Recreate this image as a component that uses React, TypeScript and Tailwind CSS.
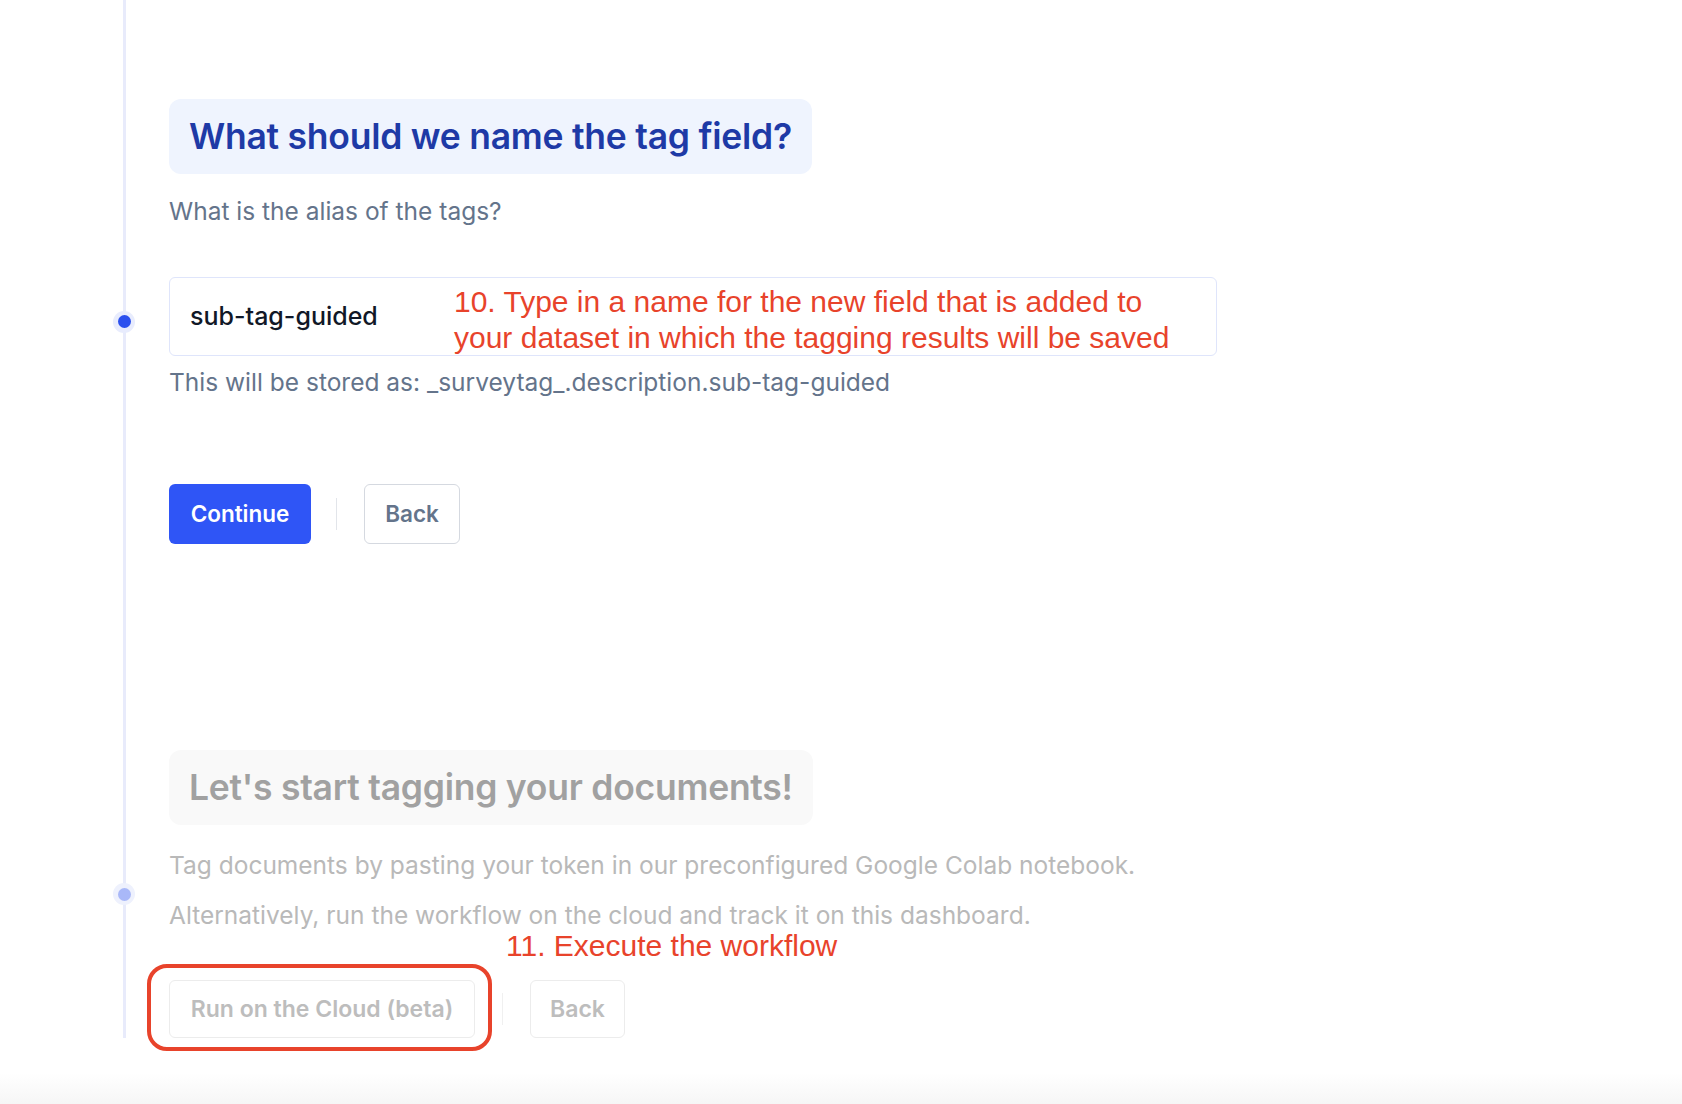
import React from "react";

const ui = { fontFamily: "Inter, 'Noto Sans', sans-serif" };
const note = { fontFamily: "'Liberation Sans', Arial, sans-serif" };

const Dot = ({ faded }: { faded?: boolean }) => (
  <span
    className={`absolute left-[-56px] top-1/2 -translate-y-1/2 flex h-[22px] w-[22px] items-center justify-center rounded-full ${
      faded ? "bg-[#eef1fd]" : "bg-[#e8ecfd]"
    }`}
  >
    <span className={`h-[13px] w-[13px] rounded-full ${faded ? "bg-[#a9b8f8]" : "bg-[#2b50ee]"}`} />
  </span>
);

export default function App() {
  return (
    <div className="flex h-[1104px] flex-col overflow-hidden bg-white" style={ui}>
      <div className="ml-[123px] border-l-[3px] border-[#e8ebfb] pl-[43px] pt-[99px]">
        {/* step 10 */}
        <div className="relative">
          <Dot />
          <div className="inline-flex h-[75px] items-center rounded-xl bg-[#eff4fe] px-[20px]">
            <h2 className="text-[35.5px] font-semibold tracking-[-0.25px] text-[#1e3aa6]">
              What should we name the tag field?
            </h2>
          </div>
          <p className="mt-[23px] text-[24.5px] leading-[28px] text-[#64748b]">What is the alias of the tags?</p>

          <div className="relative mt-[52px] flex h-[79px] w-[1048px] items-center rounded-md border border-[#dfe5fb] pl-5">
            <span className="text-[25px] font-medium text-[#111827]">sub-tag-guided</span>
            <div
              className="absolute left-[284px] top-[6px] text-[30px] leading-[36px] text-[#e8432b]"
              style={note}
            >
              10. Type in a name for the new field that is added to
              <br />
              your dataset in which the tagging results will be saved
            </div>
          </div>
          <p className="mt-[11px] text-[24.5px] leading-[30px] text-[#64748b]">
            This will be stored as: _surveytag_.description.sub-tag-guided
          </p>

          <div className="mt-[87px] flex items-center">
            <button className="h-[60px] w-[142px] rounded-md bg-[#2f55f6] text-[22.5px] font-semibold text-white">
              Continue
            </button>
            <span className="ml-[25px] mr-[27px] h-[32px] w-px bg-[#e2e5ea]" />
            <button className="h-[60px] w-[96px] rounded-md border border-[#d5d9e0] text-[22.5px] font-semibold text-[#64748b]">
              Back
            </button>
          </div>
        </div>

        {/* step 11 */}
        <div className="relative mt-[206px]">
          <Dot faded />
          <div className="inline-flex h-[75px] items-center rounded-xl bg-[#f9f9f9] px-[20px]">
            <h2 className="text-[35.5px] font-semibold tracking-[-0.25px] text-[#a1a1a1]">
              Let's start tagging your documents!
            </h2>
          </div>
          <p className="mt-[25px] text-[24.5px] leading-[30px] text-[#b9b9b9]">
            Tag documents by pasting your token in our preconfigured Google Colab notebook.
          </p>
          <p className="mt-[20px] text-[24.5px] leading-[30px] text-[#b9b9b9]">
            Alternatively, run the workflow on the cloud and track it on this dashboard.
          </p>

          <div className="relative mt-[50px] flex items-center">
            <div className="relative">
              <button className="h-[58px] w-[306px] rounded-md border border-[#ececec] text-[23px] font-semibold text-[#bdbdbd]">
                Run on the Cloud (beta)
              </button>
              <span className="pointer-events-none absolute -left-[22px] -right-[17px] -top-[16px] -bottom-[13px] rounded-[20px] border-4 border-[#e8432b]" />
            </div>
            <span className="mx-[27px] h-[32px] w-px bg-[#f0f0f0]" />
            <button className="h-[58px] w-[95px] rounded-md border border-[#ececec] text-[23px] font-semibold text-[#bdbdbd]">
              Back
            </button>
            <span className="absolute left-[337px] top-[-52px] text-[30px] leading-[36px] text-[#e8432b]" style={note}>
              11. Execute the workflow
            </span>
          </div>
        </div>
      </div>
      <div className="mt-auto h-[31px] bg-linear-to-b from-white to-[#f6f6f6]" />
    </div>
  );
}
